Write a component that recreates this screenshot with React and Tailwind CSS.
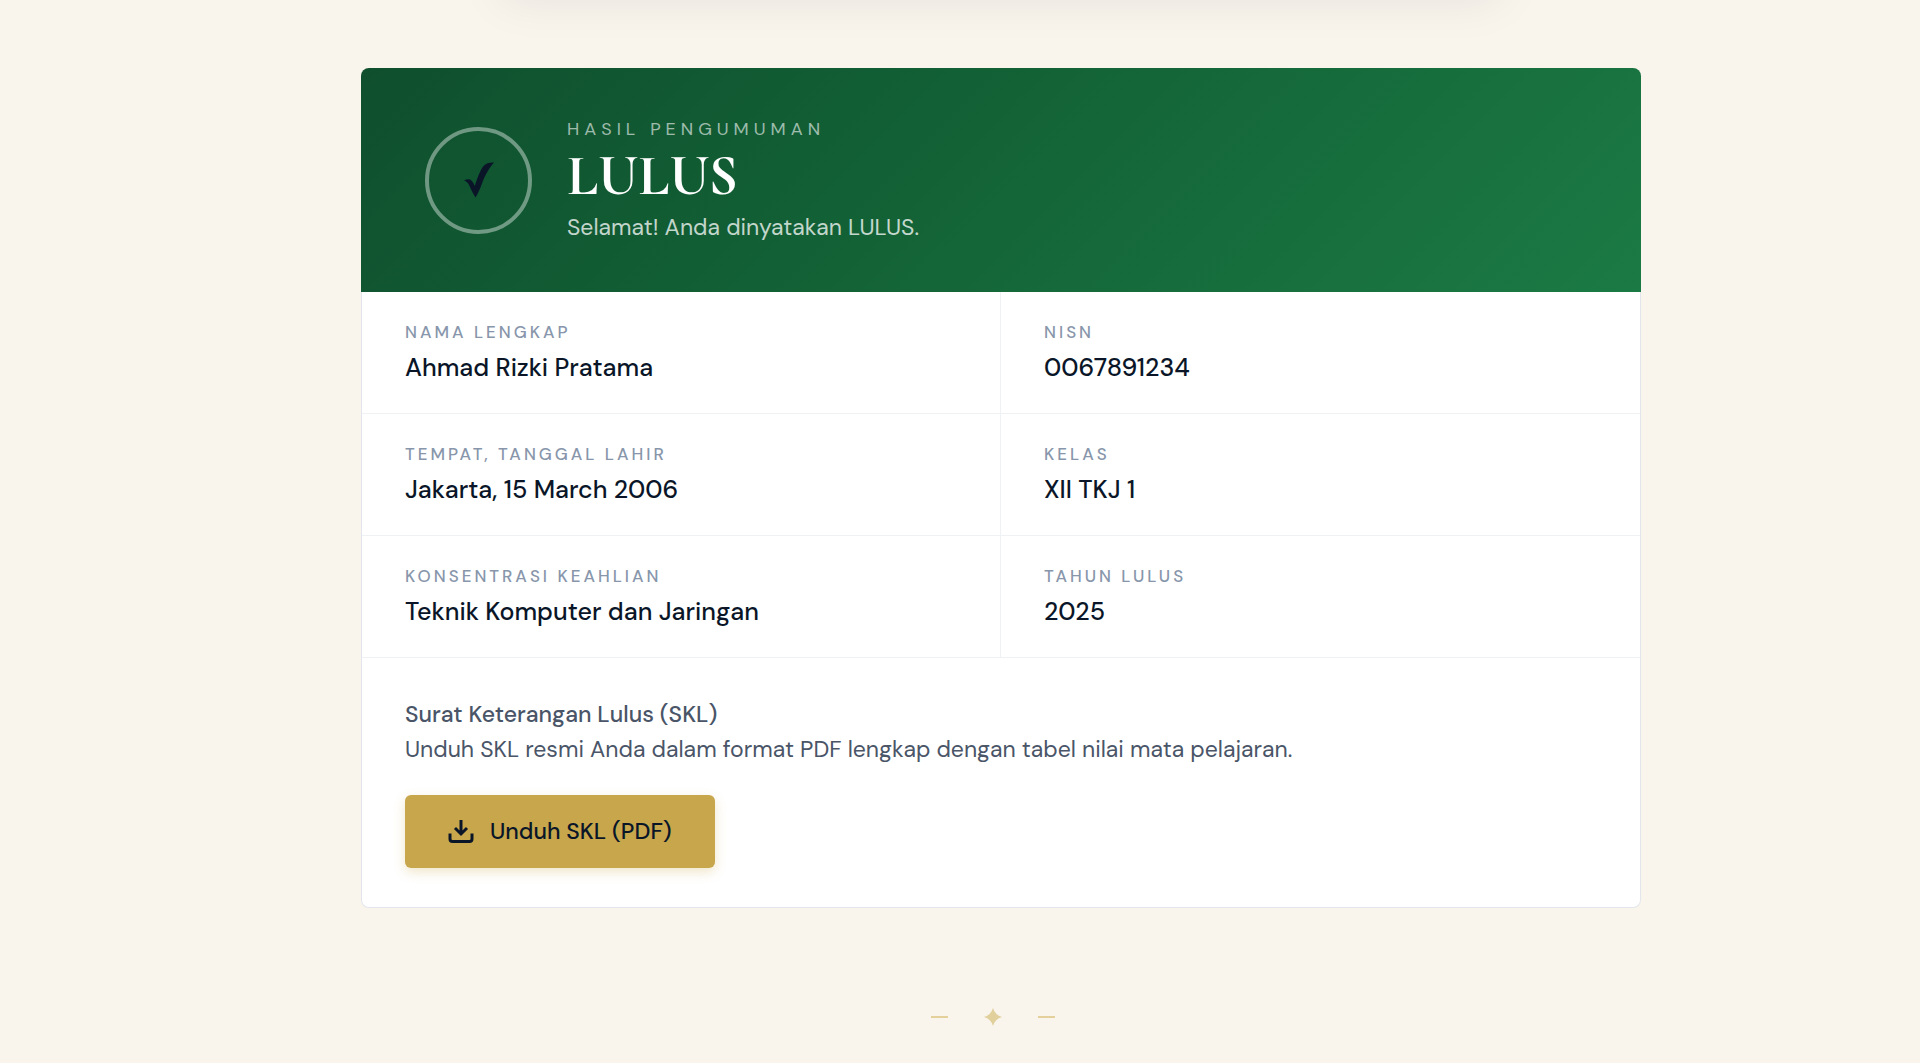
const FIELDS = [
  { label: 'Nama Lengkap', value: 'Ahmad Rizki Pratama' },
  { label: 'NISN', value: '0067891234' },
  { label: 'Tempat, Tanggal Lahir', value: 'Jakarta, 15 March 2006' },
  { label: 'Kelas', value: 'XII TKJ 1' },
  { label: 'Konsentrasi Keahlian', value: 'Teknik Komputer dan Jaringan' },
  { label: 'Tahun Lulus', value: '2025' },
]

function CheckMark() {
  return (
    <svg viewBox="0 0 30 36" className="w-[30px] h-9" fill="#0a1628" aria-hidden="true">
      <path d="M0 18.500C2 17.500 4 17 6 17.500C8 18.500 9.500 21 10.800 24C13 17 16 8.500 19.500 4C22 1.200 26 0.200 30 0.600C26 5 21 13 18 21.500C16 27 14 31.500 11.500 35.500C9.500 32.500 7.500 28.500 5.500 24C4.300 21 2.500 19.500 0 18.500Z" />
    </svg>
  )
}

function DownloadIcon() {
  return (
    <svg
      viewBox="0 0 26 26"
      className="size-[26px]"
      fill="none"
      stroke="currentColor"
      strokeWidth="3"
      aria-hidden="true"
    >
      <path d="M13 1v14M7 9l6 6 6-6" />
      <path d="M2 14.500v5.500a2.500 2.500 0 0 0 2.500 2.500h17a2.500 2.500 0 0 0 2.500-2.500v-5.500" />
    </svg>
  )
}

function ResultHeader() {
  return (
    <header className="flex items-center gap-[35px] h-56 px-16 rounded-t-lg bg-[linear-gradient(135deg,#0f4f2e_0%,#126035_40%,#1b7a44_100%)]">
      <div className="flex items-center justify-center size-[107px] shrink-0 rounded-full border-4 border-white/40">
        <CheckMark />
      </div>
      <div className="pt-0.5">
        <p className="text-[18px] leading-6 tracking-[5px] uppercase text-white/60">
          Hasil Pengumuman
        </p>
        <h1 className="font-['Cormorant_Garamond','Liberation_Serif',serif] text-[57px] leading-[69px] font-bold text-white">
          LULUS
        </h1>
        <p className="text-[23px] leading-[35px] text-white/75">Selamat! Anda dinyatakan LULUS.</p>
      </div>
    </header>
  )
}

function Field({ label, value }) {
  return (
    <div className="h-[122px] px-[43px] pt-7 border-b border-[#eef2f5] odd:border-r">
      <dt className="text-[17px] leading-6 tracking-[3px] uppercase font-medium text-[#8896ab]">
        {label}
      </dt>
      <dd className="mt-1.5 text-[25px] leading-9 font-medium text-[#0a1628]">{value}</dd>
    </div>
  )
}

export default function App() {
  return (
    <div className="min-h-screen overflow-hidden bg-[#f9f4ec] pl-[82px] font-['DM_Sans','Inter',sans-serif]">
      <div className="mx-auto h-40 -mt-44 max-w-[1000px] rounded-lg shadow-[0_16px_48px_rgba(10,22,40,0.08)]" />

      <main className="mx-auto mt-21 max-w-7xl">
        <article>
          <ResultHeader />
          <div className="rounded-b-lg border border-t-0 border-[#e2e6ec] bg-white">
            <dl className="grid grid-cols-2">
              {FIELDS.map((field) => (
                <Field key={field.label} {...field} />
              ))}
            </dl>
            <section className="px-[43px] py-[39px]">
              <h2 className="text-[23px] leading-[35px] font-medium text-[#4a5568]">
                Surat Keterangan Lulus (SKL)
              </h2>
              <p className="text-[23px] leading-[35px] text-[#4a5568]">
                Unduh SKL resmi Anda dalam format PDF lengkap dengan tabel nilai mata pelajaran.
              </p>
              <button
                type="button"
                className="mt-7 flex h-[73px] items-center gap-4 rounded-md bg-[#c8a74c] px-[43px] text-[23px] font-medium text-[#0a1628] shadow-[0_4px_12px_rgba(201,168,76,0.3)]"
              >
                <DownloadIcon />
                Unduh SKL (PDF)
              </button>
            </section>
          </div>
        </article>

        <div
          className="mt-25 flex items-center justify-center gap-9 pr-4 text-[#e1d09c]"
          aria-hidden="true"
        >
          <span className="h-0.5 w-[17px] bg-[#e4d09b]" />
          <svg viewBox="0 0 18 18" className="size-[18px]" fill="currentColor">
            <path d="M9 0Q11 7 18 9Q11 11 9 18Q7 11 0 9Q7 7 9 0Z" />
          </svg>
          <span className="h-0.5 w-[17px] bg-[#e4d09b]" />
        </div>
      </main>
    </div>
  )
}
